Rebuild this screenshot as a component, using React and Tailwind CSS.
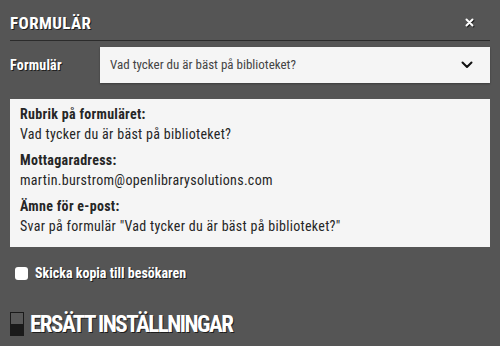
import React from "react";

function Chevron() {
  return (
    <svg width="12" height="8" viewBox="0 0 12 8" className="block">
      <polyline points="1.5,1.5 6,6 10.5,1.5" fill="none" stroke="#111" strokeWidth="2" strokeLinecap="round" strokeLinejoin="round" />
    </svg>
  );
}

function Close() {
  return (
    <svg width="9" height="9" viewBox="0 0 9 9" className="block [filter:drop-shadow(1px_1px_0_#222)]">
      <path d="M1.5 1.5 L7.5 7.5 M7.5 1.5 L1.5 7.5" stroke="#fff" strokeWidth="2" strokeLinecap="round" />
    </svg>
  );
}

export default function App() {
  return (
    <div className="w-[500px] h-[346px] bg-[#555555] px-[10px] overflow-hidden font-['Roboto_Condensed','Liberation_Sans',sans-serif]">
      <div className="h-[41px] flex items-center justify-between border-b border-[#2b2b2b] pt-[6px]">
        <div className="text-white font-bold text-[17px] leading-none tracking-[0.4px] [text-shadow:1px_1px_0_#1e1e1e]">FORMULÄR</div>
        <div className="pr-[16px] pb-[1px]"><Close /></div>
      </div>

      <div className="mt-[6px] flex items-center">
        <div className="w-[90px] text-white font-bold text-[14px] tracking-[0.2px] [text-shadow:1px_1px_0_#1e1e1e]">Formulär</div>
        <div className="flex-1 h-[36px] bg-[#f5f5f5] flex items-center justify-between pl-[10px] pr-[17px] shadow-[0_1px_2px_rgba(0,0,0,0.3)]">
          <span className="text-[13px] text-[#444]">Vad tycker du är bäst på biblioteket?</span>
          <Chevron />
        </div>
      </div>

      <div className="mt-[16px] h-[148px] bg-[#f5f5f5] px-[10px] pt-[6px] text-[14px] leading-[19.5px] text-[#262626] tracking-[0.3px]">
        <div className="font-bold">Rubrik på formuläret:</div>
        <div>Vad tycker du är bäst på biblioteket?</div>
        <div className="font-bold mt-[7px]">Mottagaradress:</div>
        <div>martin.burstrom@openlibrarysolutions.com</div>
        <div className="font-bold mt-[7px]">Ämne för e-post:</div>
        <div>Svar på formulär "Vad tycker du är bäst på biblioteket?"</div>
      </div>

      <div className="mt-[16px] flex items-center pl-[5px] h-[21px]">
        <div className="w-[13px] h-[13px] bg-white rounded-[3px]"></div>
        <div className="ml-[7px] text-white font-bold text-[14px] [text-shadow:1px_1px_0_#1e1e1e]">Skicka kopia till besökaren</div>
      </div>

      <div className="mt-[28px] flex items-center">
        <div className="w-[14px] h-[24px] border border-[#1a1a1a] flex flex-col">
          <div className="flex-1 bg-[#585858]"></div>
          <div className="flex-1 bg-[#1a1a1a]"></div>
        </div>
        <div className="ml-[6px] text-white font-bold text-[23px] leading-none tracking-[-1.5px] [text-shadow:1px_1px_0_#1e1e1e]">ERSÄTT INSTÄLLNINGAR</div>
      </div>
    </div>
  );
}
